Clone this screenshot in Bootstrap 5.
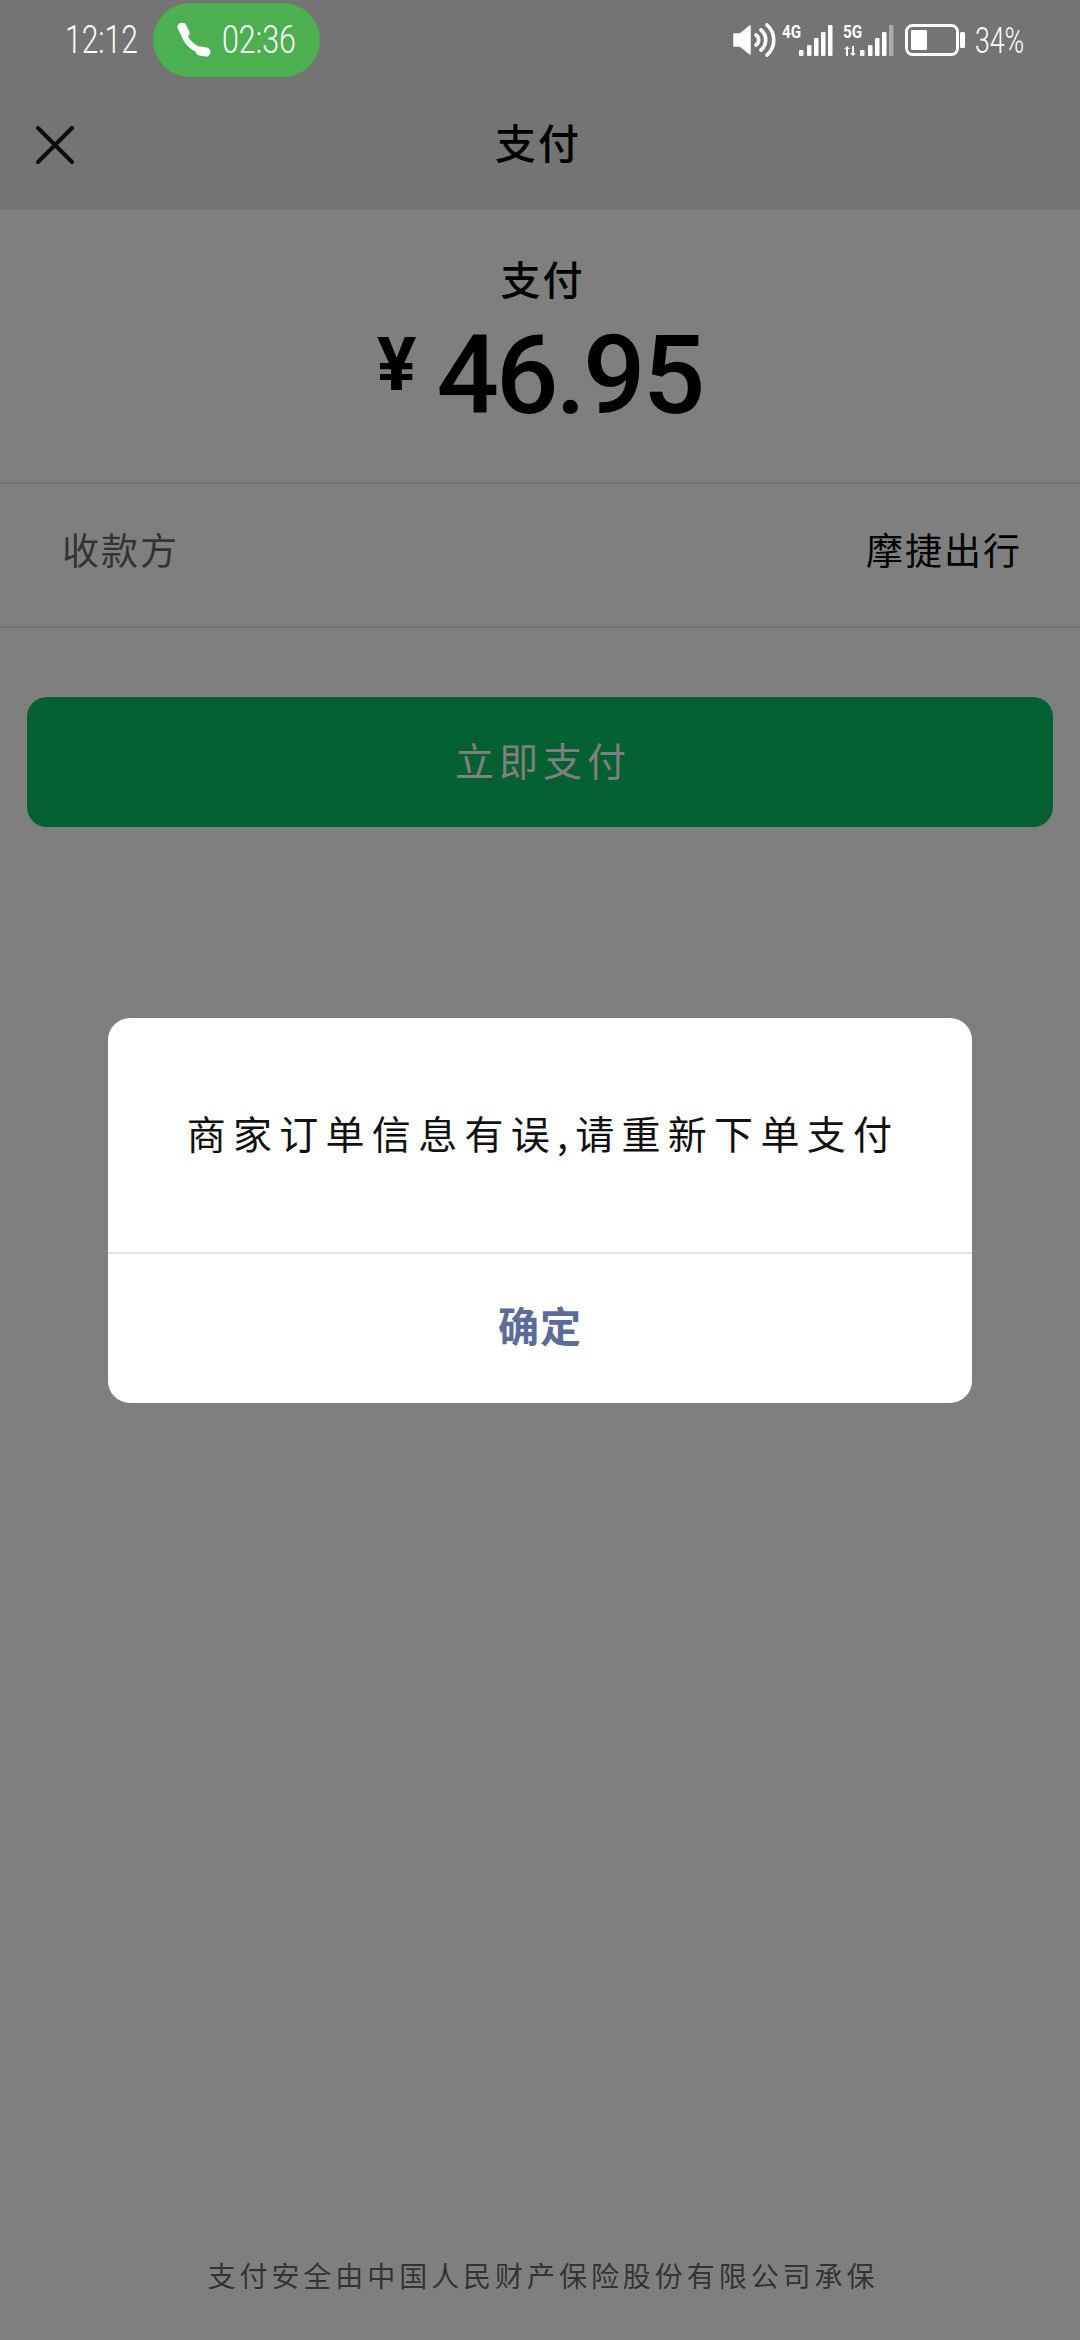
<!DOCTYPE html>
<html lang="zh">
<head>
<meta charset="utf-8">
<link href="https://cdn.jsdelivr.net/npm/bootstrap@5.3.0/dist/css/bootstrap.min.css" rel="stylesheet">
<style>
html,body{margin:0;background:#fff}
body{width:1080px;height:2340px;overflow:hidden;font-family:"Noto Sans CJK SC","Noto Sans",sans-serif;color:#000}
.screen{width:1080px;height:2340px;position:relative;background:#fff}
.scrim{position:absolute;inset:0;background:rgba(0,0,0,.5);z-index:2}
.topzone{background:#e8e8e8;height:210px}
.statusbar{position:absolute;left:0;right:0;top:0;height:80px;z-index:3;padding:3px 57px 0 65px;color:#fff}
.thin{font-family:"Roboto",sans-serif;font-weight:300;display:inline-block;white-space:nowrap;transform-origin:left center;line-height:1}
.clock{font-size:39px;width:74px;transform:scaleX(.77)}
.callpill{width:167px;height:74px;margin-left:14px;background:#4caf50;border-radius:37px;padding-left:24px;gap:11px}
.calltime{font-size:39px;width:73px;transform:scaleX(.78)}
.pct{font-size:37px;width:48px;margin-left:10px;transform:scaleX(.72)}
.sigtext{font:700 19px "Roboto",sans-serif;fill:#fff}
.sigicon{margin-top:-6px}
.navzone{position:absolute;top:80px;left:0;right:0;height:130px;padding:0 36px}
.navtitle{position:absolute;left:0;right:0;top:37px;text-align:center;font-size:41px;font-weight:500;line-height:1.2;letter-spacing:2px;padding-right:4px}
.amountzone{height:272px;padding-top:44px;padding-left:5px}
.paytitle{font-size:40px;font-weight:500;line-height:1.2;letter-spacing:2px}
.amountline{margin-top:9px;line-height:1;padding-right:6px}
.yen{font:700 74px "Roboto",sans-serif;margin-right:20px;transform:translateY(-23px);display:inline-block}
.digits{font:500 110px "Roboto",sans-serif;letter-spacing:-3px}
.payrow{height:146px;padding:0 58px 10px 62px;border-top:2px solid #e6e6e6;border-bottom:2px solid #e6e6e6;font-size:37px;letter-spacing:2px}
.paylabel{color:rgba(0,0,0,.62)}
.paybtn{margin:69px 27px 0;height:130px;width:1026px;background:#07c160;color:#fff;border:0;border-radius:20px;font-size:39px;letter-spacing:5px;padding:0 0 6px 6px}
.legal{position:absolute;left:0;right:0;top:2256px;text-align:center;font-size:28px;letter-spacing:3.95px;line-height:1.4;color:rgba(0,0,0,.62);padding-left:6px}
.dialog{position:absolute;z-index:4;left:108px;top:1018px;width:864px;height:385px;background:#fff;border-radius:22px;overflow:hidden}
.dialogbody{height:234px;font-size:39px;letter-spacing:7.3px;color:#111;padding:0 0 5px 6px}
.dialogfoot{height:151px;border-top:2px solid #e3e3e3;color:#5b6c9b;font-size:41px;font-weight:700;letter-spacing:1px;padding-bottom:8px}
.gap-a{margin-left:5px}
.gap-b{margin-left:9px}
.gap-c{margin-left:10px}
</style>
</head>
<body>
<div class="screen">
  <div class="topzone"></div>
  <div class="navzone d-flex align-items-center">
    <svg width="38" height="38" viewBox="0 0 38 38" fill="none" stroke="#1a1a1a" stroke-width="4" stroke-linecap="round"><path d="M2 2 36 36M36 2 2 36"/></svg>
    <div class="navtitle">支付</div>
  </div>
  <div class="amountzone text-center">
    <div class="paytitle">支付</div>
    <div class="amountline"><span class="yen">¥</span><span class="digits">46.95</span></div>
  </div>
  <div class="payrow d-flex justify-content-between align-items-center">
    <span class="paylabel">收款方</span><span>摩捷出行</span>
  </div>
  <button class="paybtn d-flex align-items-center justify-content-center" type="button">立即支付</button>
  <div class="legal">支付安全由中国人民财产保险股份有限公司承保</div>

  <div class="scrim"></div>

  <div class="statusbar d-flex align-items-start">
    <div class="d-flex align-items-center" style="height:74px">
      <span class="clock thin">12:12</span>
    </div>
    <div class="callpill d-flex align-items-center">
      <svg width="34" height="34" viewBox="0 0 34 34" fill="none" stroke="#fff" stroke-linecap="round"><path d="M6 6C7 17 15 26 27 28" stroke-width="6"/><path d="M5 4 8 10" stroke-width="9"/><path d="M23 28 29 29" stroke-width="9"/></svg>
      <span class="calltime thin">02:36</span>
    </div>
    <div class="ms-auto d-flex align-items-center" style="height:74px">
      <svg width="44" height="34" viewBox="0 0 44 34" fill="none" stroke="#fff" stroke-width="3.6" stroke-linecap="round"><path d="M1 11h6L17 3v28L7 23H1Z" fill="#fff" stroke-width="1.500" stroke-linejoin="round"/><path d="M23 12a6 6 0 0 1 0 10M28 7a13 13 0 0 1 0 20M34 2a20 20 0 0 1 0 30"/></svg>
      <svg class="gap-a sigicon" width="52" height="38" viewBox="0 -6 52 38"><text class="sigtext" transform="translate(0 14) scale(.8 1)">4G</text><g fill="#fff"><rect x="17" y="26" width="4.500" height="6" rx="1"/><rect x="25" y="21" width="4.500" height="11" rx="1"/><rect x="32" y="14" width="4.500" height="18" rx="1"/><rect x="39" y="8" width="4.500" height="24" rx="1"/><rect x="46" y="1" width="4.500" height="31" rx="1"/></g></svg>
      <svg class="gap-b sigicon" width="52" height="38" viewBox="0 -6 52 38"><text class="sigtext" transform="translate(0 14) scale(.8 1)">5G</text><g fill="#fff"><path d="M1 25 4 22 7 25H5V32H3V25ZM9 22H11V29H13L10 32 7 29H9Z"/><rect x="17" y="26" width="4.500" height="6" rx="1"/><rect x="25" y="21" width="4.500" height="11" rx="1"/><rect x="32" y="14" width="4.500" height="18" rx="1"/><rect x="39" y="8" width="4.500" height="24" rx="1"/></g><rect x="46" y="1" width="4.500" height="31" fill="#fff" opacity=".4"/></svg>
      <svg class="gap-c" width="60" height="32" viewBox="0 0 60 32"><rect x="1.500" y="1.500" width="51" height="29" rx="6" fill="none" stroke="#fff" stroke-width="3"/><rect x="6" y="6" width="16" height="20" rx="1" fill="#fff"/><rect x="55" y="8" width="5" height="16" rx="1.500" fill="#fff"/></svg>
      <span class="pct thin">34%</span>
    </div>
  </div>

  <div class="dialog d-flex flex-column">
    <div class="dialogbody d-flex align-items-center justify-content-center">商家订单信息有误,请重新下单支付</div>
    <div class="dialogfoot d-flex align-items-center justify-content-center">确定</div>
  </div>
</div>
<script src="https://cdn.jsdelivr.net/npm/bootstrap@5.3.0/dist/js/bootstrap.bundle.min.js"></script>
</body>
</html>
